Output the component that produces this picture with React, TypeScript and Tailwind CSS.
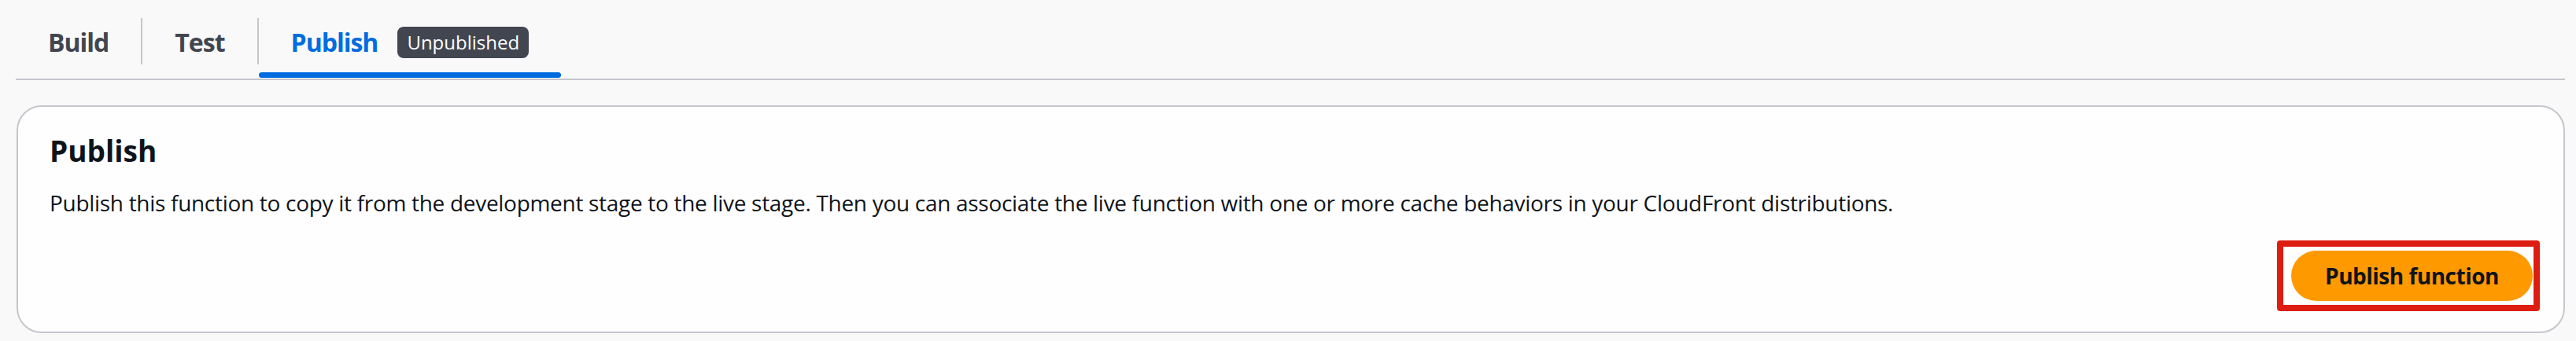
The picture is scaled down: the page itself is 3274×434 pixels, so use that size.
import React from 'react';

const tabs = [
  { label: 'Build', active: false },
  { label: 'Test', active: false },
  { label: 'Publish', active: true, badge: 'Unpublished' },
];

function Tab({ label, active, badge }: { label: string; active: boolean; badge?: string }) {
  return (
    <div className="flex flex-col h-full">
      <div className="flex-1 flex items-center gap-[25px] pt-[15px] px-[41px]">
        <span
          className={
            active
              ? 'text-[32px] font-bold tracking-[-1px] text-[#006ce0]'
              : 'text-[32px] font-bold tracking-[-1px] text-[#424650]'
          }
        >
          {label}
        </span>
        {badge && (
          <span className="h-[40px] px-[12px] flex items-center rounded-[8px] bg-[#424650] text-white text-[24px] leading-none">
            {badge}
          </span>
        )}
      </div>
      <div className={active ? 'h-[7px] mb-[1px] rounded-full bg-[#006ce0]' : 'h-[7px] mb-[1px]'} />
    </div>
  );
}

export default function App() {
  return (
    <div
      className="min-h-screen bg-[#f9f9f9] pl-[20px] pr-[14px] text-[#0f141a]"
      style={{ fontFamily: '"Open Sans", "Noto Sans", sans-serif' }}
    >
      {/* tab header */}
      <div className="flex items-start h-[102px] border-b-2 border-[#c6c6cd]">
        {tabs.map((t, i) => (
          <React.Fragment key={t.label}>
            {i > 0 && <div className="w-[2px] h-[59px] mt-[23px] bg-[#c6c6cd]" />}
            <Tab {...t} />
          </React.Fragment>
        ))}
      </div>

      {/* publish container */}
      <div className="mt-[32px] ml-[1px] bg-[#fefefe] border-2 border-[#c6c6cd] rounded-[32px] px-[40px] pt-[34px] pb-[26px]">
        <h2 className="text-[37px] leading-[44px] font-bold">Publish</h2>
        <p className="mt-[24px] text-[28px] leading-[40px] tracking-[-0.3px]">
          Publish this function to copy it from the development stage to the live stage. Then you can associate the live
          function with one or more cache behaviors in your CloudFront distributions.
        </p>
        <div className="mt-[28px] flex justify-end -mr-[10px]">
          <div className="border-[8px] border-[#dd1d10] rounded-[4px] pl-[10px] pr-[1px] py-[5px]">
            <button className="h-[64px] w-[307px] rounded-full bg-[#ff9900] text-[28px] font-bold tracking-[-0.5px] text-[#0f141a]">
              Publish function
            </button>
          </div>
        </div>
      </div>
    </div>
  );
}
